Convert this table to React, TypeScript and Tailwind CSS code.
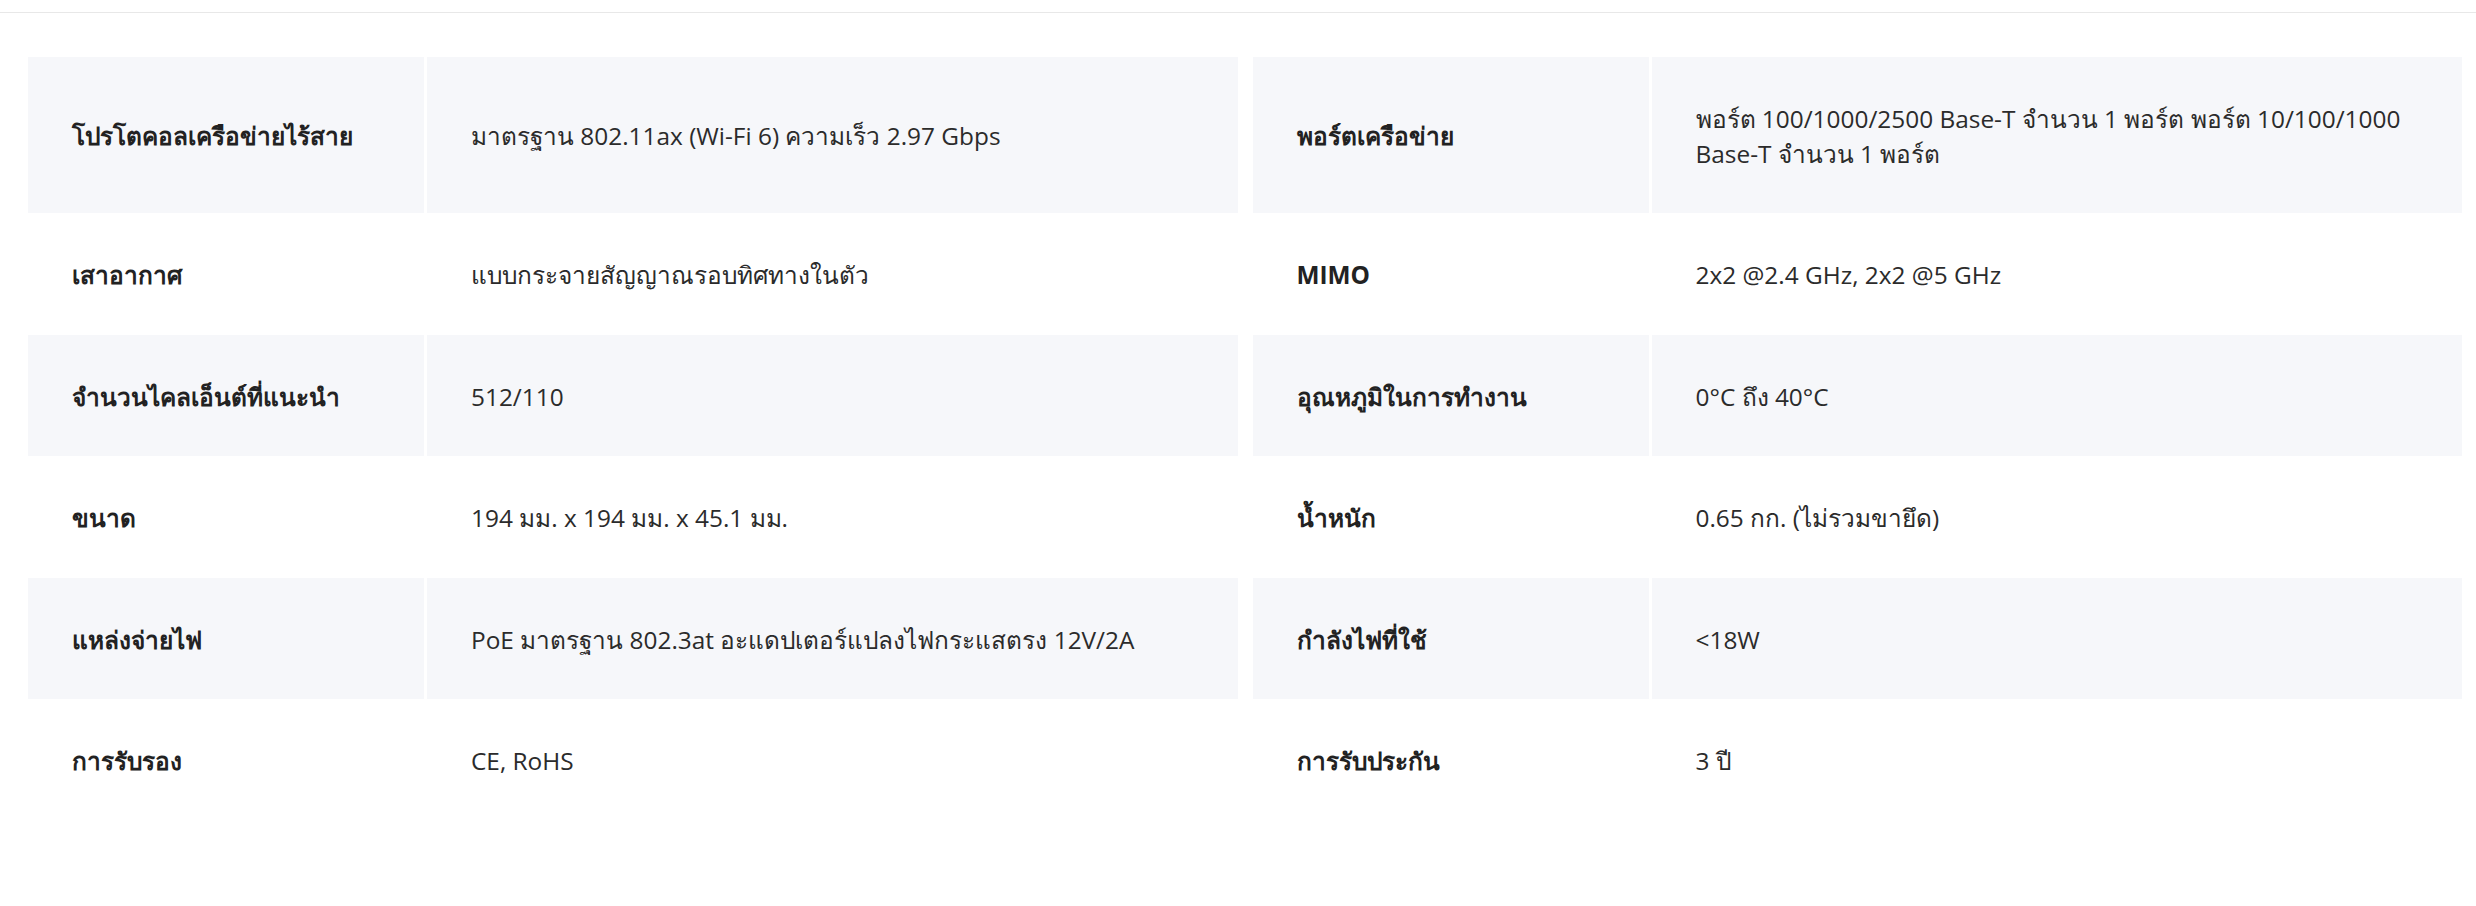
const specs: [string, string][][] = [
  [
    ["โปรโตคอลเครือข่ายไร้สาย", "มาตรฐาน 802.11ax (Wi-Fi 6) ความเร็ว 2.97 Gbps"],
    ["พอร์ตเครือข่าย", "พอร์ต 100/1000/2500 Base-T จำนวน 1 พอร์ต พอร์ต 10/100/1000 Base-T จำนวน 1 พอร์ต"],
  ],
  [
    ["เสาอากาศ", "แบบกระจายสัญญาณรอบทิศทางในตัว"],
    ["MIMO", "2x2 @2.4 GHz, 2x2 @5 GHz"],
  ],
  [
    ["จำนวนไคลเอ็นต์ที่แนะนำ", "512/110"],
    ["อุณหภูมิในการทำงาน", "0°C ถึง 40°C"],
  ],
  [
    ["ขนาด", "194 มม. x 194 มม. x 45.1 มม."],
    ["น้ำหนัก", "0.65 กก. (ไม่รวมขายึด)"],
  ],
  [
    ["แหล่งจ่ายไฟ", "PoE มาตรฐาน 802.3at อะแดปเตอร์แปลงไฟกระแสตรง 12V/2A"],
    ["กำลังไฟที่ใช้", "<18W"],
  ],
  [
    ["การรับรอง", "CE, RoHS"],
    ["การรับประกัน", "3 ปี"],
  ],
];

function SpecCell({ label, value, shaded }: { label: string; value: string; shaded: boolean }) {
  const bg = shaded ? "bg-[#f6f7fa]" : "bg-white";
  return (
    <div className="grid grid-cols-[396px_1fr] gap-[3px]">
      <div className={`${bg} flex items-center px-[44px] pt-[45px] pb-[42px] font-bold text-[#222222]`}>{label}</div>
      <div className={`${bg} flex items-center px-[44px] pt-[45px] pb-[42px] text-[#2b2b2b]`}>{value}</div>
    </div>
  );
}

export default function App() {
  return (
    <div
      className="min-h-[906px] bg-white text-[24.4px] leading-[34.5px]"
      style={{ fontFamily: '"Open Sans", "Noto Sans", sans-serif' }}
    >
      {/* top rule */}
      <div className="h-[13px] border-b border-[#e8e8e8]" />

      {/* spec table */}
      <div className="pl-[28px] pr-[14px] pt-[44px]">
        {specs.map((row, i) => (
          <div key={i} className="grid grid-cols-2 gap-x-[15px]">
            {row.map(([label, value]) => (
              <SpecCell key={label} label={label} value={value} shaded={i % 2 === 0} />
            ))}
          </div>
        ))}
      </div>
    </div>
  );
}
